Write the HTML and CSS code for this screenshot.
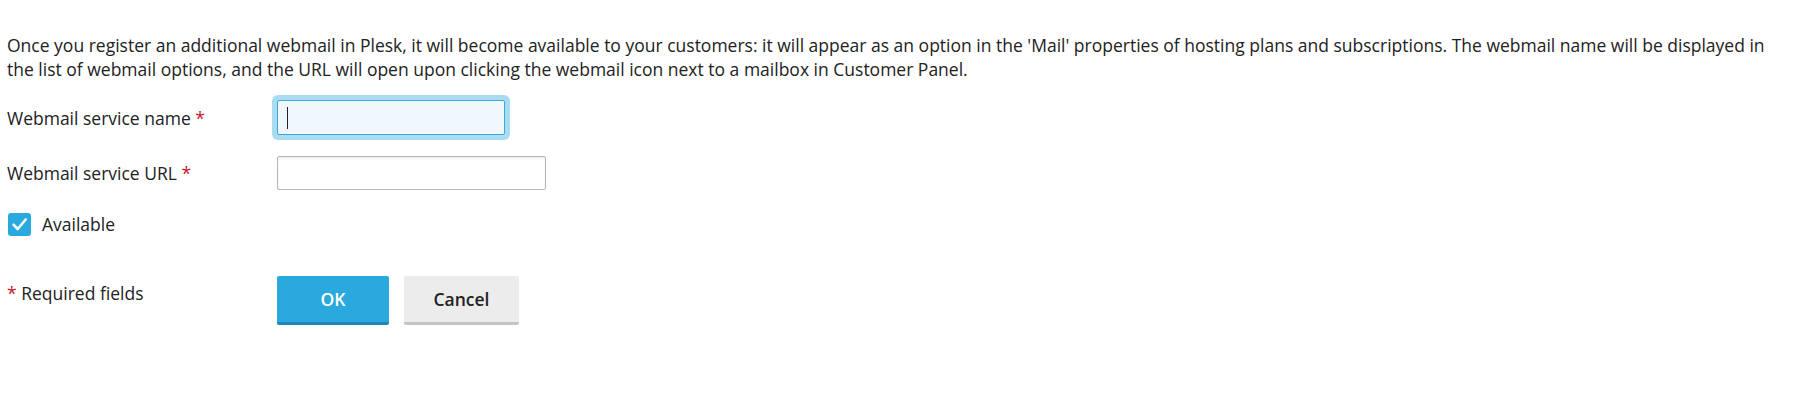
FILE: index.html
```html
<!DOCTYPE html>
<html>
<head>
<meta charset="utf-8">
<link rel="stylesheet" href="styles.css">
</head>
<body>
<div class="page">
  <p class="hint">Once you register an additional webmail in Plesk, it will become available to your customers: it will appear as an option in the 'Mail' properties of hosting plans and subscriptions. The webmail name will be displayed in the list of webmail options, and the URL will open upon clicking the webmail icon next to a mailbox in Customer Panel.</p>
  <form class="form">
    <div class="row row-name">
      <label class="label">Webmail service name <span class="req">*</span></label>
      <div class="field"><input class="input input-focus" type="text"><span class="caret"></span></div>
    </div>
    <div class="row row-url">
      <label class="label">Webmail service URL <span class="req">*</span></label>
      <div class="field"><input class="input input-wide" type="text"></div>
    </div>
    <div class="check-row">
      <span class="checkbox"><svg width="23" height="23" viewBox="0 0 23 23"><path d="M5.5 11.6 L9.7 16 L17.7 6.5" fill="none" stroke="#fff" stroke-width="2.6" stroke-linecap="round" stroke-linejoin="round"/></svg></span>
      <span class="check-label">Available</span>
    </div>
    <div class="row row-buttons">
      <div class="label required"><span class="req">*</span> Required fields</div>
      <div class="buttons">
        <button type="button" class="btn btn-primary">OK</button>
        <button type="button" class="btn btn-default">Cancel</button>
      </div>
    </div>
  </form>
</div>
</body>
</html>
```
FILE: styles.css
```css
html, body {
  margin: 0;
  padding: 0;
  background: #fff;
}
body {
  font-family: "Open Sans", "Liberation Sans", sans-serif;
  font-size: 17.5px;
  color: #222;
}
.page {
  padding: 33px 8px 0 7px;
}
.hint {
  margin: 0;
  line-height: 24px;
}
.form {
  margin-top: 19px;
}
.row {
  display: grid;
  grid-template-columns: 270px auto;
  align-items: center;
}
.label {
  line-height: 24px;
}
.req {
  color: #c3182d;
}
.field {
  position: relative;
  display: flex;
}
.input {
  box-sizing: border-box;
  height: 35px;
  border: 1px solid #b5b5b5;
  border-radius: 2px;
  background: #fff;
  box-shadow: inset 0 2px 2px rgba(0,0,0,0.06);
  font: inherit;
  padding: 0 10px;
  outline: none;
  margin: 0;
}
.input-focus {
  width: 228px;
  border-color: #3aa9dc;
  background: #f1f8fd;
  box-shadow: 0 0 0 5px #a9dcf1;
}
.caret {
  position: absolute;
  left: 10px;
  top: 7px;
  width: 1px;
  height: 22px;
  background: #222;
}
.input-wide {
  width: 269px;
  height: 34px;
}
.row-url {
  margin-top: 21px;
}
.check-row {
  display: flex;
  align-items: center;
  margin-top: 22px;
  margin-left: 1px;
}
.checkbox {
  width: 23px;
  height: 23px;
  border-radius: 3px;
  background: #29a9de;
  display: flex;
}
.check-label {
  margin-left: 11px;
}
.row-buttons {
  margin-top: 40px;
  align-items: start;
}
.required {
  margin-top: 5px;
}
.buttons {
  display: flex;
  gap: 15px;
}
.btn {
  box-sizing: border-box;
  height: 49px;
  border: 0;
  border-radius: 2px;
  font: inherit;
  font-size: 17.5px;
  font-weight: 600;
  padding: 0;
  cursor: pointer;
}
.btn-primary {
  width: 112px;
  background: #29a9de;
  color: #fff;
  border-bottom: 3px solid #1e87b8;
}
.btn-default {
  width: 115px;
  background: #ececec;
  color: #222;
  border-bottom: 3px solid #c4c4c4;
}
```
